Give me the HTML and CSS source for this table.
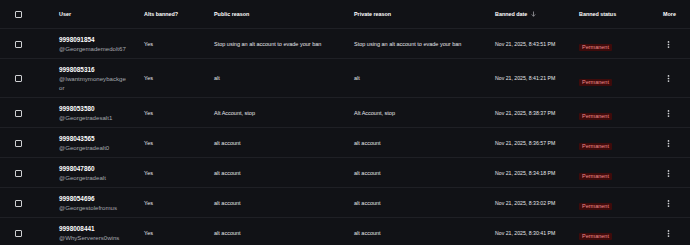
FILE: index.html
```html
<!DOCTYPE html>
<html>
<head>
<meta charset="utf-8">
<link rel="stylesheet" href="styles.css">
</head>
<body>
<div class="table">
  <div class="row head">
    <div class="c-check"><span class="box"></span></div>
    <div>User</div>
    <div>Alts banned?</div>
    <div>Public reason</div>
    <div>Private reason</div>
    <div class="sortable">Banned date <svg class="sort" width="5" height="6" viewBox="0 0 5 6"><path d="M2.5 0.5V5.3M0.7 3.4L2.5 5.3L4.3 3.4" fill="none" stroke="#9a9ba0" stroke-width="0.8"/></svg></div>
    <div>Banned status</div>
    <div>More</div>
  </div>

  <div class="row">
    <div class="c-check"><span class="box"></span></div>
    <div class="user"><div class="id">9998091854</div><div class="handle">@Georgemademedolt67</div></div>
    <div class="cell">Yes</div>
    <div class="cell">Stop using an alt account to evade your ban</div>
    <div class="cell">Stop using an alt account to evade your ban</div>
    <div class="cell date">Nov 21, 2025, 8:43:51 PM</div>
    <div><span class="badge">Permanent</span></div>
    <div class="more"><svg width="3" height="7" viewBox="0 0 3 7"><circle cx="1.5" cy="0.9" r="0.85"/><circle cx="1.5" cy="3.5" r="0.85"/><circle cx="1.5" cy="6.1" r="0.85"/></svg></div>
  </div>

  <div class="row">
    <div class="c-check"><span class="box"></span></div>
    <div class="user"><div class="id">9998085316</div><div class="handle">@Iwantmymoneybackge<br>or</div></div>
    <div class="cell">Yes</div>
    <div class="cell">alt</div>
    <div class="cell">alt</div>
    <div class="cell date">Nov 21, 2025, 8:41:21 PM</div>
    <div><span class="badge">Permanent</span></div>
    <div class="more"><svg width="3" height="7" viewBox="0 0 3 7"><circle cx="1.5" cy="0.9" r="0.85"/><circle cx="1.5" cy="3.5" r="0.85"/><circle cx="1.5" cy="6.1" r="0.85"/></svg></div>
  </div>

  <div class="row">
    <div class="c-check"><span class="box"></span></div>
    <div class="user"><div class="id">9998053580</div><div class="handle">@Georgetradesalt1</div></div>
    <div class="cell">Yes</div>
    <div class="cell">Alt Account, stop</div>
    <div class="cell">Alt Account, stop</div>
    <div class="cell date">Nov 21, 2025, 8:38:37 PM</div>
    <div><span class="badge">Permanent</span></div>
    <div class="more"><svg width="3" height="7" viewBox="0 0 3 7"><circle cx="1.5" cy="0.9" r="0.85"/><circle cx="1.5" cy="3.5" r="0.85"/><circle cx="1.5" cy="6.1" r="0.85"/></svg></div>
  </div>

  <div class="row">
    <div class="c-check"><span class="box"></span></div>
    <div class="user"><div class="id">9998043565</div><div class="handle">@Georgetradealt0</div></div>
    <div class="cell">Yes</div>
    <div class="cell">alt account</div>
    <div class="cell">alt account</div>
    <div class="cell date">Nov 21, 2025, 8:36:57 PM</div>
    <div><span class="badge">Permanent</span></div>
    <div class="more"><svg width="3" height="7" viewBox="0 0 3 7"><circle cx="1.5" cy="0.9" r="0.85"/><circle cx="1.5" cy="3.5" r="0.85"/><circle cx="1.5" cy="6.1" r="0.85"/></svg></div>
  </div>

  <div class="row">
    <div class="c-check"><span class="box"></span></div>
    <div class="user"><div class="id">9998047860</div><div class="handle">@Georgetradealt</div></div>
    <div class="cell">Yes</div>
    <div class="cell">alt account</div>
    <div class="cell">alt account</div>
    <div class="cell date">Nov 21, 2025, 8:34:18 PM</div>
    <div><span class="badge">Permanent</span></div>
    <div class="more"><svg width="3" height="7" viewBox="0 0 3 7"><circle cx="1.5" cy="0.9" r="0.85"/><circle cx="1.5" cy="3.5" r="0.85"/><circle cx="1.5" cy="6.1" r="0.85"/></svg></div>
  </div>

  <div class="row">
    <div class="c-check"><span class="box"></span></div>
    <div class="user"><div class="id">9998054696</div><div class="handle">@Georgestolefromus</div></div>
    <div class="cell">Yes</div>
    <div class="cell">alt account</div>
    <div class="cell">alt account</div>
    <div class="cell date">Nov 21, 2025, 8:33:02 PM</div>
    <div><span class="badge">Permanent</span></div>
    <div class="more"><svg width="3" height="7" viewBox="0 0 3 7"><circle cx="1.5" cy="0.9" r="0.85"/><circle cx="1.5" cy="3.5" r="0.85"/><circle cx="1.5" cy="6.1" r="0.85"/></svg></div>
  </div>

  <div class="row">
    <div class="c-check"><span class="box"></span></div>
    <div class="user"><div class="id">9998008441</div><div class="handle">@WhyServerers0wins</div></div>
    <div class="cell">Yes</div>
    <div class="cell">alt account</div>
    <div class="cell">alt account</div>
    <div class="cell date">Nov 21, 2025, 8:30:41 PM</div>
    <div><span class="badge">Permanent</span></div>
    <div class="more"><svg width="3" height="7" viewBox="0 0 3 7"><circle cx="1.5" cy="0.9" r="0.85"/><circle cx="1.5" cy="3.5" r="0.85"/><circle cx="1.5" cy="6.1" r="0.85"/></svg></div>
  </div>
</div>
</body>
</html>
```

FILE: styles.css
```css
html, body {
  margin: 0;
  padding: 0;
  background: #111216;
  overflow: hidden;
}
body {
  font-family: "Liberation Sans", Arial, sans-serif;
  color: #e6e7ea;
}
.table {
  width: 690px;
}
.row {
  display: grid;
  grid-template-columns: 59px 85px 70px 140px 141px 84px 84px 27px;
  align-items: center;
  padding: 6px 0 5px;
  min-height: 18px;
  border-bottom: 1px solid #1f2025;
}
.row.head {
  padding: 0;
  height: 28px;
  font-size: 5.4px;
  font-weight: 700;
  color: #ffffff;
}
.sortable {
  display: flex;
  align-items: center;
  gap: 4px;
}
.sort {
  display: block;
}
.c-check {
  padding-left: 15px;
  display: flex;
  align-items: center;
}
.box {
  display: block;
  width: 5px;
  height: 5px;
  border: 1.2px solid #cfd0d3;
  border-radius: 1px;
}
.user {
  line-height: 9px;
  width: 74px;
}
.id {
  font-size: 6.4px;
  font-weight: 700;
  color: #ffffff;
}
.handle {
  font-size: 6.1px;
  color: #a6a8ae;
}
.cell {
  font-size: 5.5px;
  line-height: 9px;
}
.date {
  font-size: 5.2px;
}
.badge {
  display: inline-block;
  font-size: 5.5px;
  line-height: 7px;
  padding: 0 3px;
  background: #3e0b0b;
  color: #f08a8a;
  border-radius: 1px;
}
.more {
  padding-left: 4px;
  display: flex;
  align-items: center;
}
.more svg {
  display: block;
  fill: #d4d5d8;
}
```
